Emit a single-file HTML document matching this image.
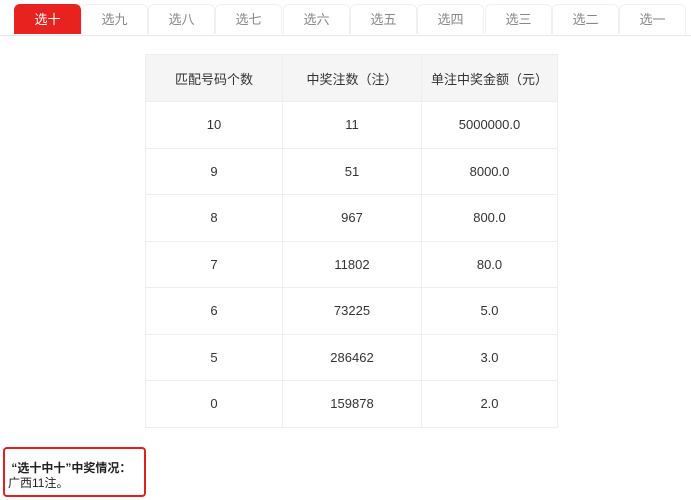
<!DOCTYPE html>
<html><head><meta charset="utf-8"><style>
body{margin:0;width:691px;height:500px;background:#fff;font-family:"Liberation Sans","Noto Sans CJK SC",sans-serif;position:relative;overflow:hidden}
.tabs{position:absolute;left:0;top:0;width:691px;height:35px;border-bottom:1px solid #e8e8e8}
.tab{position:absolute;top:4px;height:30px;width:67px;text-align:center;line-height:30px;font-size:13px;color:#888;border:1px solid #f0f0f0;border-bottom:none;box-sizing:border-box;border-radius:6px 6px 0 0}
.tab.on{background:#e8221f;color:#fff;border-color:#e8221f}
table{position:absolute;left:145px;top:54px;border-collapse:collapse;font-size:13px;color:#333}
td{border:1px solid #eee;text-align:center;height:45.5px;padding:0}
tr.h td{background:#f5f5f5;height:46px}
.box{position:absolute;left:3px;top:447px;width:143px;height:50px;border:2px solid #e02020;border-radius:4px;box-sizing:border-box;font-size:12px;color:#222;padding:12px 0 0 3px;line-height:15px}
</style></head><body>
<div class="tabs">
<div class="tab on" style="left:14px">选十</div>
<div class="tab" style="left:81px">选九</div>
<div class="tab" style="left:148px">选八</div>
<div class="tab" style="left:215px">选七</div>
<div class="tab" style="left:283px">选六</div>
<div class="tab" style="left:350px">选五</div>
<div class="tab" style="left:417px">选四</div>
<div class="tab" style="left:485px">选三</div>
<div class="tab" style="left:552px">选二</div>
<div class="tab" style="left:619px">选一</div>
</div>
<table>
<tr class="h"><td style="width:136px">匹配号码个数</td><td style="width:138px">中奖注数（注）</td><td style="width:135px">单注中奖金额（元）</td></tr>
<tr><td>10</td><td>11</td><td>5000000.0</td></tr>
<tr><td>9</td><td>51</td><td>8000.0</td></tr>
<tr><td>8</td><td>967</td><td>800.0</td></tr>
<tr><td>7</td><td>11802</td><td>80.0</td></tr>
<tr><td>6</td><td>73225</td><td>5.0</td></tr>
<tr><td>5</td><td>286462</td><td>3.0</td></tr>
<tr><td>0</td><td>159878</td><td>2.0</td></tr>
</table>
<div class="box"><b>&nbsp;“选十中十”中奖情况：</b><br>广西11注。</div>
</body></html>
